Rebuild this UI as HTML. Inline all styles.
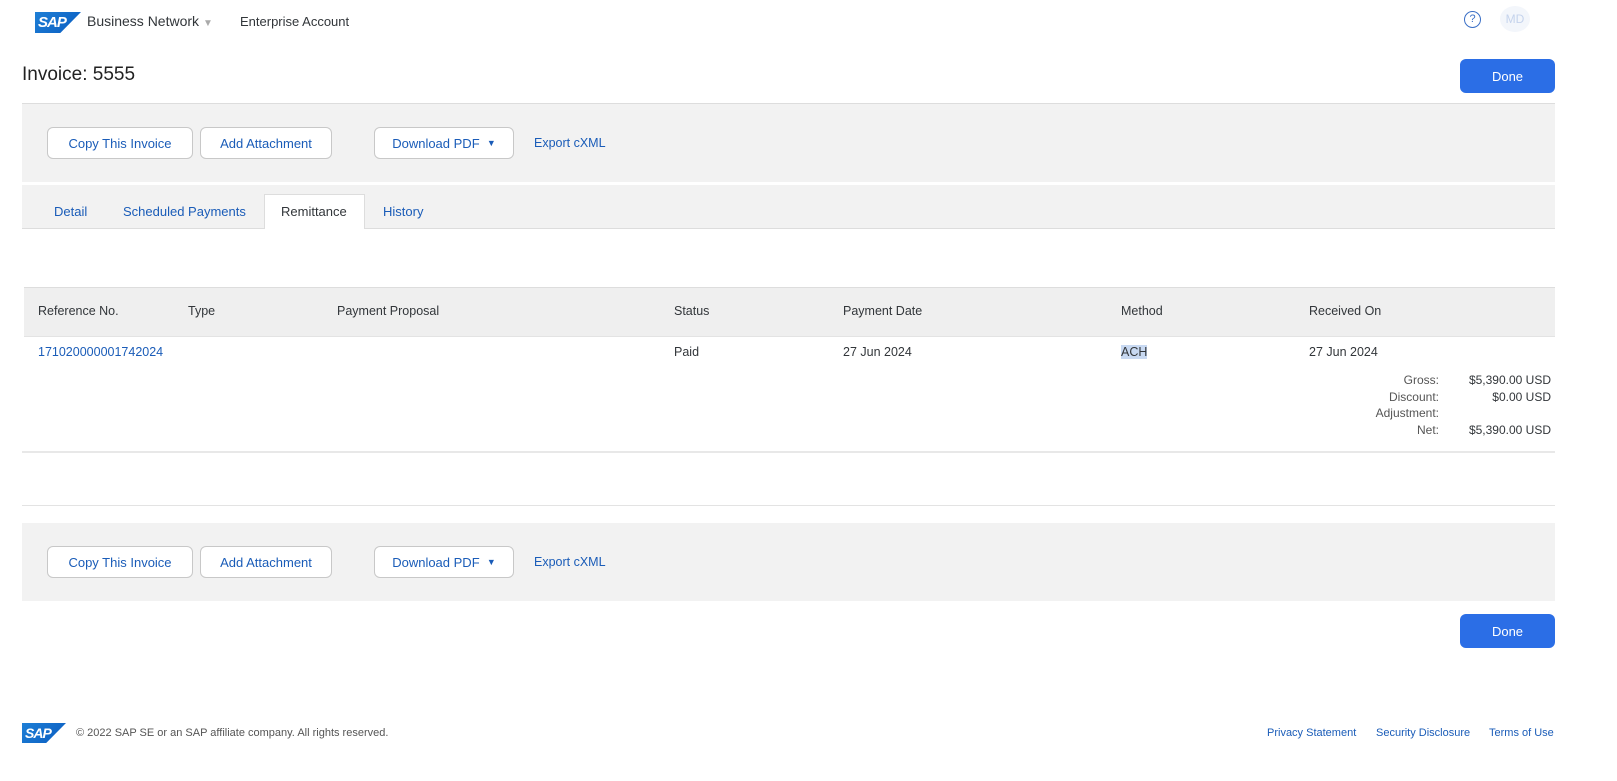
<!DOCTYPE html><html><head><style>
body{margin:0;width:1617px;height:781px;background:#fff;font-family:"Liberation Sans",sans-serif;font-size:12.5px;color:#32363a;position:relative;overflow:hidden}
.a{position:absolute}
.btn{position:absolute;height:32px;border:1px solid #c8c8c8;border-radius:6px;background:#fff;color:#1a5cb8;font-size:13px;display:flex;align-items:center;justify-content:center;box-sizing:border-box}
.done{position:absolute;left:1460px;width:95px;height:34px;background:#2b6ee6;color:#fff;border-radius:6px;font-size:13px;display:flex;align-items:center;justify-content:center}
.bar{position:absolute;left:22px;width:1533px;height:78px;background:#f2f2f2}
.link{color:#1a5cb8}
.logo{position:absolute;width:46px;height:21px;background:linear-gradient(135deg,#1e7fd6,#0a5cc0);clip-path:polygon(0 0,100% 0,55% 100%,0 100%);color:#fff;font-weight:bold;font-size:15px;font-style:italic;letter-spacing:-1px;line-height:21px;padding-left:3px;box-sizing:border-box}
</style></head><body>
<div class="logo" style="left:35px;top:12px">SAP</div>
<div class="a" style="left:87px;top:13px;font-size:14px">Business Network <span style="color:#aaa;font-size:10px">&#9660;</span></div>
<div class="a" style="left:240px;top:14px;font-size:13px">Enterprise Account</div>
<div class="a" style="left:1464px;top:11px;width:15px;height:15px;border:1.5px solid #3a6fc6;border-radius:50%;color:#3a6fc6;font-size:11px;text-align:center;line-height:15px">?</div>
<div class="a" style="left:1500px;top:6px;width:30px;height:26px;border-radius:50%;background:#f3f6fb;color:#c5d3ec;font-size:12px;text-align:center;line-height:26px">MD</div>
<div class="a" style="left:22px;top:64px;font-size:19px;color:#222">Invoice: 5555</div>
<div class="done" style="top:59px">Done</div>
<div class="a" style="left:22px;top:103px;width:1533px;height:1px;background:#ddd"></div>
<div class="bar" style="top:104px"></div>
<div class="btn" style="left:47px;top:127px;width:146px">Copy This Invoice</div>
<div class="btn" style="left:200px;top:127px;width:132px">Add Attachment</div>
<div class="btn" style="left:374px;top:127px;width:140px">Download PDF &nbsp;<span style="font-size:9px">&#9660;</span></div>
<div class="a link" style="left:534px;top:136px">Export cXML</div>
<div class="a" style="left:22px;top:185px;width:1533px;height:43px;background:#f2f2f2;border-bottom:1px solid #ddd"></div>
<div class="a" style="left:264px;top:194px;width:101px;height:35px;background:#fff;border:1px solid #ddd;border-bottom:none;box-sizing:border-box"></div>
<div class="a link" style="left:54px;top:204px;font-size:13px">Detail</div>
<div class="a link" style="left:123px;top:204px;font-size:13px">Scheduled Payments</div>
<div class="a" style="left:281px;top:204px;font-size:13px">Remittance</div>
<div class="a link" style="left:383px;top:204px;font-size:13px">History</div>
<div class="a" style="left:24px;top:287px;width:1531px;height:48px;background:#efefef;border-top:1px solid #ddd;border-bottom:1px solid #e3e3e3"></div>
<div class="a" style="left:38px;top:304px">Reference No.</div>
<div class="a" style="left:188px;top:304px">Type</div>
<div class="a" style="left:337px;top:304px">Payment Proposal</div>
<div class="a" style="left:674px;top:304px">Status</div>
<div class="a" style="left:843px;top:304px">Payment Date</div>
<div class="a" style="left:1121px;top:304px">Method</div>
<div class="a" style="left:1309px;top:304px">Received On</div>
<div class="a link" style="left:38px;top:345px">171020000001742024</div>
<div class="a" style="left:674px;top:345px">Paid</div>
<div class="a" style="left:843px;top:345px">27 Jun 2024</div>
<div class="a" style="left:1121px;top:345px;background:#c8d9f2">ACH</div>
<div class="a" style="left:1309px;top:345px">27 Jun 2024</div>
<div class="a" style="left:1340px;top:372px;width:99px;text-align:right;color:#555;font-size:12px;line-height:16.5px">Gross:<br>Discount:<br>Adjustment:<br>Net:</div>
<div class="a" style="left:1450px;top:372px;width:101px;text-align:right;font-size:12px;line-height:16.5px">$5,390.00 USD<br>$0.00 USD<br>&nbsp;<br>$5,390.00 USD</div>
<div class="a" style="left:22px;top:451px;width:1533px;height:2px;background:#e8e8e8"></div>
<div class="a" style="left:22px;top:505px;width:1533px;height:1px;background:#e3e3e3"></div>
<div class="bar" style="top:523px"></div>
<div class="btn" style="left:47px;top:546px;width:146px">Copy This Invoice</div>
<div class="btn" style="left:200px;top:546px;width:132px">Add Attachment</div>
<div class="btn" style="left:374px;top:546px;width:140px">Download PDF &nbsp;<span style="font-size:9px">&#9660;</span></div>
<div class="a link" style="left:534px;top:555px">Export cXML</div>
<div class="done" style="top:614px">Done</div>
<div class="logo" style="left:22px;top:723px;width:44px;height:20px;font-size:14px;line-height:20px">SAP</div>
<div class="a" style="left:76px;top:727px;font-size:11px;color:#555">© 2022 SAP SE or an SAP affiliate company. All rights reserved.</div>
<div class="a link" style="left:1267px;top:727px;font-size:11px">Privacy Statement</div>
<div class="a link" style="left:1376px;top:727px;font-size:11px">Security Disclosure</div>
<div class="a link" style="left:1489px;top:727px;font-size:11px">Terms of Use</div>
</body></html>
